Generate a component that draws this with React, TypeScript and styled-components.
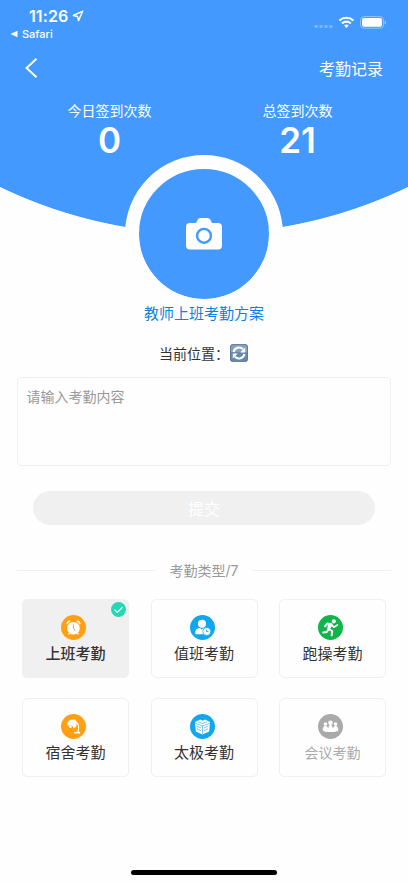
import React from 'react';
import styled, { createGlobalStyle } from 'styled-components';

const BLUE = '#4499ff';

const GlobalStyle = createGlobalStyle`
  *, *::before, *::after { box-sizing: border-box; }
  body { margin: 0; background: #fefefe; }
  button, textarea { font: inherit; }
`;

const Screen = styled.div`
  width: 408px;
  height: 883px;
  display: flex;
  flex-direction: column;
  overflow: hidden;
  background: #fefefe;
  color: #333;
  font-family: Inter, 'Noto Sans CJK SC', sans-serif;
`;

const Hero = styled.header`
  height: 300px;
  flex: none;
  display: flex;
  flex-direction: column;
  color: #fff;
  background: radial-gradient(circle at 50% -236.5px, ${BLUE} 469.6px, transparent 470.4px);
`;

const StatusBar = styled.div`
  height: 46px;
  flex: none;
  display: flex;
  justify-content: space-between;
  padding: 5px 22px 0 10px;
`;

const Clock = styled.div`
  display: flex;
  align-items: center;
  gap: 4px;
  height: 21px;
  padding-left: 19px;
  font-size: 16px;
  font-weight: 600;
  letter-spacing: 0.1px;
`;

const BackToApp = styled.div`
  display: flex;
  align-items: center;
  gap: 4px;
  height: 16px;
  font-size: 11px;
  font-weight: 500;
`;

const Signals = styled.div`
  display: flex;
  align-items: flex-start;
  padding-top: 10px;
`;

const NavBar = styled.nav`
  height: 44px;
  flex: none;
  display: flex;
  align-items: center;
  justify-content: space-between;
  padding: 0 25px 0 24px;
  font-size: 16px;
`;

const BackButton = styled.button`
  display: flex;
  padding: 0;
  border: 0;
  background: none;
  color: inherit;
`;

const Stats = styled.div`
  height: 65px;
  flex: none;
  display: flex;
  justify-content: space-between;
  padding: 11px 17px 0 16px;
`;

const Stat = styled.div`
  width: 187px;
  display: flex;
  flex-direction: column;
  align-items: center;
`;

const StatLabel = styled.span`
  font-size: 14px;
  line-height: 20px;
`;

const StatValue = styled.span`
  font-size: 35px;
  line-height: 39px;
  font-weight: 600;
`;

const CameraButton = styled.button`
  flex: none;
  align-self: center;
  width: 158px;
  height: 158px;
  padding: 0;
  border: 14px solid #fefefe;
  border-radius: 50%;
  display: flex;
  align-items: center;
  justify-content: center;
  background: ${BLUE};
  background-clip: padding-box;
`;

const PlanName = styled.h1`
  margin: 0;
  height: 28px;
  line-height: 28px;
  text-align: center;
  font-size: 15px;
  font-weight: 400;
  color: #1080e0;
`;

const Location = styled.div`
  height: 49px;
  display: flex;
  align-items: center;
  padding-left: 159px;
  font-size: 14px;
`;

const LocationLabel = styled.span`
  width: 71px;
`;

const Form = styled.form`
  display: flex;
  flex-direction: column;
  padding: 0 17px;
`;

const Content = styled.textarea`
  height: 89px;
  padding: 9px 8.5px;
  border: 1px solid #f0f0f0;
  border-radius: 4px;
  outline: 0;
  resize: none;
  background: #fefefe;
  font-size: 14px;
  line-height: 20px;
  &::placeholder { color: #999; opacity: 1; }
`;

const Submit = styled.button`
  height: 34px;
  margin: 25px 16px 0;
  padding: 0;
  border: 0;
  border-radius: 17px;
  background: #f0f0f0;
  color: #fff;
  font-size: 16px;
  font-weight: 400;
`;

const Divider = styled.div`
  height: 20px;
  margin: 35px 17px 19px;
  display: flex;
  align-items: center;
  gap: 15px;
  color: #999;
  font-size: 14px;
  &::before, &::after {
    content: '';
    flex: 1;
    height: 1px;
    background: #f0f0f0;
  }
`;

const Grid = styled.div`
  display: grid;
  grid-template-columns: repeat(3, 107px);
  justify-content: space-between;
  row-gap: 19.5px;
  padding: 0 22px;
`;

const Card = styled.div<{ $active?: boolean; $disabled?: boolean }>`
  position: relative;
  height: 79px;
  padding-top: 15px;
  display: flex;
  flex-direction: column;
  align-items: center;
  border: 1px solid #f0f0f0;
  border-radius: 5px;
  background: ${p => (p.$active ? '#f0f0f0' : '#fefefe')};
  color: ${p => (p.$disabled ? '#aaa' : '#333')};
  font-size: ${p => (p.$disabled ? 14 : 15)}px;
  font-weight: ${p => (p.$active ? 500 : 400)};
  line-height: 27px;
`;

const TypeIcon = styled.svg`
  width: 25px;
  height: 25px;
  flex: none;
  margin-right: 4px;
`;

const Check = styled.svg`
  position: absolute;
  top: 2px;
  right: 2px;
  width: 15px;
  height: 15px;
`;

const HomeIndicator = styled.div`
  width: 146px;
  height: 5px;
  margin: auto auto 8px;
  border-radius: 3px;
  background: #000;
`;

const glyphs: Record<string, React.ReactNode> = {
  clock: (
    <>
      <circle cx="12.5" cy="13.2" r="6.3" fill="#fff" />
      <path d="M6.2 9.3a3 3 0 0 1 3-3M18.8 9.3a3 3 0 0 0-3-3" stroke="#fff" strokeWidth="1.6" />
      <path d="M12.4 9.5v3.8l1.8 2.3" stroke="#ff9f1a" />
      <path d="m8.5 18-1 1.4m9-1.4 1 1.4" stroke="#fff" strokeWidth="1.3" />
    </>
  ),
  duty: (
    <>
      <circle cx="12" cy="8.8" r="4" fill="#fff" />
      <path d="M5.3 19.3v-2c0-3 2-4 5-4.3l1.5 1.8 1.3-1.8 2 .4-1.6 3 1.6 2.9Z" fill="#fff" />
      <circle cx="16.7" cy="16.5" r="4" fill="#fff" stroke="#10a7ef" strokeWidth=".8" />
      <path d="M16.5 14.5v2.1h2" stroke="#10a7ef" strokeWidth=".9" />
    </>
  ),
  run: (
    <>
      <circle cx="15.8" cy="6.3" r="2.1" fill="#fff" />
      <path d="m7 11.3 2.2-2.7 4.400.7-2.900 4.700 3.500 2-.5 4.300M10.800 14l-2 2.900-3.600.5" stroke="#fff" strokeWidth="2" strokeLinejoin="round" strokeLinecap="round" />
      <path d="m13.500 9.800 2.400 2.300 3.500-2.100" stroke="#fff" strokeWidth="1.600" strokeLinejoin="round" strokeLinecap="round" />
      <path d="m10.200 8.500 4 1-2.400 5-2.600-.8Z" fill="#fff" />
    </>
  ),
  lamp: (
    <>
      <path d="m6.400 8.200 3-2.400 4.600-.4 2.100 2.800-1 4.600-2.300 1.500-1.900-3-4.400.3Z" fill="#fff" />
      <path d="M15 8.200c3.300 1.300 3.100 5.200 2.200 10" stroke="#fff" strokeWidth="1.200" />
      <path d="M13.300 17.900h5.800v1.600h-5.800Z" fill="#fff" />
      <circle cx="9.400" cy="12.600" r="1.500" fill="#fff" />
    </>
  ),
  cube: (
    <>
      <path d="m5 8 5.300-2.400 2.200 1.200 2.500-1.200L20 8l-.8 9.500-6.700 2.900-6.700-2.900Z" fill="#fff" />
      <path d="m5.400 9.300 7.100 2.700 7.200-2.700M12.500 12v7.800M8 7.800l4.500 1.700L17 7.800M6.500 12l4.500 2m-4.200.8 4 1.800m7.500-4.600-4.300 2m4 .8-4 1.800" stroke="#169fe8" strokeWidth=".6" />
    </>
  ),
  meeting: (
    <>
      <circle cx="12.5" cy="8.8" r="2.3" fill="#fff" />
      <circle cx="7.5" cy="10" r="1.8" fill="#fff" />
      <circle cx="17.5" cy="10" r="1.8" fill="#fff" />
      <path d="M4.7 16.5c0-2.9.9-4.7 2.8-4.7.9 0 1.5.6 2 1.2l.8.9c.2-1.9.8-3 2.2-3s2 1.1 2.2 3l.8-.9c.5-.6 1.1-1.2 2-1.2 1.9 0 2.8 1.8 2.8 4.7-2.4 2.1-13.2 2.1-15.6 0Z" fill="#fff" />
      <path d="m10.5 14.2-.9-1.4m4.9 1.4.9-1.4" stroke="#aaa" strokeWidth=".6" />
    </>
  ),
};

const types = [
  { label: '上班考勤', icon: 'clock', color: '#ff9f14', active: true },
  { label: '值班考勤', icon: 'duty', color: '#10a7ef' },
  { label: '跑操考勤', icon: 'run', color: '#10b54a' },
  { label: '宿舍考勤', icon: 'lamp', color: '#ff9f14' },
  { label: '太极考勤', icon: 'cube', color: '#10a7ef' },
  { label: '会议考勤', icon: 'meeting', color: '#aaa', disabled: true },
];

const LocationArrow = () => (
  <svg width="12" height="12" viewBox="0 0 12 12" fill="none">
    <path d="M10.7 1.2 1.3 5.5l4.2 1 1 4.1Z" stroke="#fff" strokeWidth="1.4" strokeLinejoin="round" />
  </svg>
);

const SignalIcons = () => (
  <svg width="74" height="16" viewBox="0 0 74 16" fill="none">
    <g fill="#fff" opacity=".3">
      <rect x="2.5" y="10" width="3.300" height="3" rx=".8" />
      <rect x="7.400" y="10" width="3.300" height="3" rx=".8" />
      <rect x="12.300" y="10" width="3.300" height="3" rx=".8" />
      <rect x="17.200" y="10" width="3.300" height="3" rx=".8" />
    </g>
    <g stroke="#fff" strokeWidth="2.100">
      <path d="M27.400 5.500a10.200 10.200 0 0 1 14 0" />
      <path d="M30 8.400a6.400 6.400 0 0 1 8.800 0" />
    </g>
    <path d="m34.400 13-2.300-2.500a3.400 3.400 0 0 1 4.600 0Z" fill="#fff" />
    <rect x="48.500" y="1.600" width="23" height="11.600" rx="3.500" stroke="#fff" opacity=".4" />
    <rect x="50" y="3.100" width="20" height="8.600" rx="2" fill="#fff" />
    <path d="M72.700 5.500c1.800.7 1.800 3.300 0 4Z" fill="#fff" opacity=".5" />
  </svg>
);

const CameraIcon = () => (
  <svg width="38" height="34" viewBox="0 0 38 34">
    <path d="M5 6h6l1.600-3.200Q13.500 1 15.500 1h7q2 0 2.900 1.800L27 6h6q4 0 4 4v18.500q0 4-4 4H5q-4 0-4-4V10q0-4 4-4Z" fill="#fff" />
    <circle cx="19" cy="18.800" r="6.900" fill="#fff" stroke={BLUE} strokeWidth="2.400" />
  </svg>
);

const RefreshIcon = () => (
  <svg width="18" height="18" viewBox="0 0 18 18" fill="none">
    <rect x=".4" y=".4" width="17.200" height="17.200" rx="2.500" fill="#6688ad" stroke="#4e6685" strokeWidth=".8" />
    <path d="M1 8V3Q1 1 3 1h12Q17 1 17 3V8Z" fill="#87a1bd" />
    <path d="M3.600 8a5.500 5.500 0 0 1 9.400-2.700M14.400 10a5.500 5.500 0 0 1-9.400 2.700" stroke="#fff" strokeWidth="2.100" />
    <path d="M15.200 3.600v5h-5ZM2.800 14.400v-5h5Z" fill="#fff" />
  </svg>
);

export default function App() {
  return (
    <>
      <GlobalStyle />
      <Screen>
        <Hero>
          <StatusBar>
            <div>
              <Clock>11:26<LocationArrow /></Clock>
              <BackToApp>
                <svg width="8" height="8" viewBox="0 0 8 8"><path d="M.5 4 7.500.8v6.400Z" fill="#fff" /></svg>
                Safari
              </BackToApp>
            </div>
            <Signals><SignalIcons /></Signals>
          </StatusBar>
          <NavBar>
            <BackButton aria-label="返回">
              <svg width="14" height="22" viewBox="0 0 14 22" fill="none">
                <path d="m12.500 1.800-10 9.200 10 9.200" stroke="#fff" strokeWidth="2" />
              </svg>
            </BackButton>
            <span>考勤记录</span>
          </NavBar>
          <Stats>
            <Stat><StatLabel>今日签到次数</StatLabel><StatValue>0</StatValue></Stat>
            <Stat><StatLabel>总签到次数</StatLabel><StatValue>21</StatValue></Stat>
          </Stats>
          <CameraButton aria-label="拍照"><CameraIcon /></CameraButton>
        </Hero>
        <PlanName>教师上班考勤方案</PlanName>
        <Location><LocationLabel>当前位置：</LocationLabel><RefreshIcon /></Location>
        <Form onSubmit={e => e.preventDefault()}>
          <Content placeholder="请输入考勤内容" />
          <Submit disabled>提交</Submit>
        </Form>
        <Divider>考勤类型/7</Divider>
        <Grid>
          {types.map(t => (
            <Card key={t.label} $active={t.active} $disabled={t.disabled}>
              <TypeIcon viewBox="0 0 25 25" fill="none">
                <circle cx="12.5" cy="12.5" r="12.5" fill={t.color} />
                {glyphs[t.icon]}
              </TypeIcon>
              {t.label}
              {t.active && (
                <Check viewBox="0 0 15 15" fill="none">
                  <circle cx="7.5" cy="7.5" r="7.5" fill="#26d6b4" />
                  <path d="m3.500 7.600 2.800 2.800 5.300-5.300" stroke="#fff" strokeWidth="1.100" />
                </Check>
              )}
            </Card>
          ))}
        </Grid>
        <HomeIndicator />
      </Screen>
    </>
  );
}
